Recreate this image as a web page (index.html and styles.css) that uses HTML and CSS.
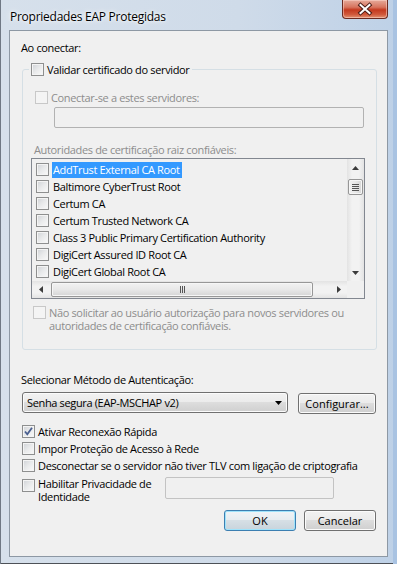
FILE: index.html
```html
<!DOCTYPE html>
<html lang="pt-BR">
<head>
  <meta charset="UTF-8" />
  <title>Propriedades EAP Protegidas</title>
  <link rel="stylesheet" href="styles.css">
</head>
<body>
  <div class="window">
    <div class="titlebar">
      <span class="title">Propriedades EAP Protegidas</span>
      <span class="close">
        <svg width="44" height="18" viewBox="0 0 44 18">
          <path d="M17.5 5 L26.5 13 M26.5 5 L17.5 13" stroke="#4b1d17" stroke-width="4" stroke-linecap="square" fill="none"/>
          <path d="M17.5 5 L26.5 13 M26.5 5 L17.5 13" stroke="#fff" stroke-width="2" stroke-linecap="square" fill="none"/>
        </svg>
      </span>
    </div>

    <div class="client">
      <div class="label">Ao conectar:</div>

      <fieldset class="group">
        <legend><span class="check"><span class="box"></span>Validar certificado do servidor</span></legend>

        <div class="check disabled servers"><span class="box"></span>Conectar-se a estes servidores:</div>
        <div class="textbox servers-box"></div>

        <div class="label disabled ca-label">Autoridades de certificação raiz confiáveis:</div>
        <div class="listbox">
          <ul class="items">
            <li><span class="box"></span><span class="name selected">AddTrust External CA Root</span></li>
            <li><span class="box"></span><span class="name">Baltimore CyberTrust Root</span></li>
            <li><span class="box"></span><span class="name">Certum CA</span></li>
            <li><span class="box"></span><span class="name">Certum Trusted Network CA</span></li>
            <li><span class="box"></span><span class="name">Class 3 Public Primary Certification Authority</span></li>
            <li><span class="box"></span><span class="name">DigiCert Assured ID Root CA</span></li>
            <li><span class="box"></span><span class="name">DigiCert Global Root CA</span></li>
          </ul>
          <div class="vscroll">
            <span class="arrow"><svg width="7" height="4"><polygon points="0,4 3.5,0 7,4" fill="#3c3c3c"/></svg></span>
            <span class="vthumb"><i></i><i></i><i></i><i></i></span>
            <span class="spacer"></span>
            <span class="arrow"><svg width="7" height="4"><polygon points="0,0 3.5,4 7,0" fill="#3c3c3c"/></svg></span>
          </div>
          <div class="hscroll">
            <span class="arrow"><svg width="4" height="7"><polygon points="4,0 0,3.5 4,7" fill="#3c3c3c"/></svg></span>
            <span class="hthumb"><i></i><i></i><i></i></span>
            <span class="spacer"></span>
            <span class="arrow"><svg width="4" height="7"><polygon points="0,0 4,3.5 0,7" fill="#3c3c3c"/></svg></span>
          </div>
          <div class="corner"></div>
        </div>

        <div class="check disabled multi">
          <span class="box"></span>
          <span>Não solicitar ao usuário autorização para novos servidores ou autoridades de certificação confiáveis.</span>
        </div>
      </fieldset>

      <div class="label method-label">Selecionar Método de Autenticação:</div>
      <div class="method-row">
        <div class="combo">
          <span>Senha segura (EAP-MSCHAP v2)</span>
          <svg width="7" height="4"><polygon points="0,0 7,0 3.5,4" fill="#000"/></svg>
        </div>
        <button class="btn configure">Configurar...</button>
      </div>

      <div class="options">
        <div class="check opt">
          <span class="box checked">
            <svg width="11" height="11" viewBox="0 0 11 11"><path d="M2 5.5 L4.3 8.3 L9 1.8" stroke="#4a5f8f" stroke-width="1.8" fill="none"/></svg>
          </span>Ativar Reconexão Rápida
        </div>
        <div class="check opt"><span class="box"></span>Impor Proteção de Acesso à Rede</div>
        <div class="check opt"><span class="box"></span>Desconectar se o servidor não tiver TLV com ligação de criptografia</div>
        <div class="privacy">
          <div class="check privacy-check"><span class="box"></span><span class="privacy-text">Habilitar Privacidade de Identidade</span></div>
          <div class="textbox identity-box"></div>
        </div>
      </div>

      <div class="actions">
        <button class="btn default">OK</button>
        <button class="btn">Cancelar</button>
      </div>
    </div>
  </div>
</body>
</html>
```

FILE: styles.css
```css
* {
  box-sizing: border-box;
}
body {
  margin: 0;
  font-family: "Open Sans", "Segoe UI", sans-serif;
  font-size: 11px;
  letter-spacing: -0.35px;
  color: #000;
}
.window {
  width: 397px;
  height: 564px;
  padding: 0 9px 7px 9px;
  display: flex;
  flex-direction: column;
  background: linear-gradient(to right, #d6e0eb 0%, #cfdbe9 60%, #bed1e7 100%);
  box-shadow: inset 1px 0 0 #6f7884, inset -4px 0 0 #a9c3e2, inset 0 -1px 0 #4d5157;
}
.titlebar {
  height: 30px;
  display: flex;
  justify-content: space-between;
  align-items: flex-start;
}
.title {
  padding: 9px 0 0 1px;
  font-size: 12px;
  line-height: 15px;
  letter-spacing: -0.25px;
  text-shadow: 0 0 6px #fff, 0 0 3px #fff;
}
.close {
  width: 46px;
  height: 19px;
  border: 1px solid #6b2a21;
  border-top: none;
  border-radius: 0 0 4px 4px;
  background: linear-gradient(#e6aa9b 0%, #d7745e 40%, #c4391f 55%, #d0583b 80%, #e29272 100%);
  box-shadow: inset 0 0 0 1px rgba(255, 220, 210, 0.5);
}
.close svg {
  display: block;
}
.client {
  flex: 1;
  border: 1px solid #8d98a4;
  background-color: #f0f0f0;
  padding: 9px 10px 0 11px;
}
.label {
  line-height: 15px;
}
.disabled {
  color: #8d8d8d;
}

/* checkbox */
.check {
  display: flex;
  align-items: center;
  gap: 3px;
}
.box {
  flex: none;
  width: 13px;
  height: 13px;
  border: 1px solid #8e8f8f;
  background: linear-gradient(135deg, #cfd2d6 0%, #e9eaeb 50%, #fafafa 100%);
  box-shadow: inset 0 0 0 1px #f4f4f4;
}
.box.checked {
  display: flex;
  align-items: center;
  justify-content: center;
}
.disabled .box {
  border-color: #c8c8c8;
  background: #f4f4f4;
  box-shadow: none;
}

/* group box */
.group {
  margin: 7px 0 0 1px;
  padding: 0;
  border: 1px solid #d5dfe5;
  border-radius: 3px;
}
.group legend {
  margin-left: 6px;
  padding: 0 2px;
  line-height: 15px;
}
.servers {
  margin: 13px 0 0 12px;
  line-height: 15px;
}
.textbox {
  border: 1px solid #b2b2b2;
  background-color: #f0f0f0;
  border-radius: 2px;
}
.servers-box {
  height: 21px;
  margin: 2px 12px 0 31px;
}
.ca-label {
  margin: 14px 0 0 11px;
}

/* list of certificates */
.listbox {
  height: 141px;
  margin: 1px 11px 0 8px;
  border: 1px solid #828790;
  background-color: #f0f0f0;
  display: grid;
  grid-template-columns: 1fr 17px;
  grid-template-rows: 1fr 17px;
}
.items {
  list-style: none;
  margin: 0;
  padding: 2px 0 0 4px;
  overflow: hidden;
  white-space: nowrap;
}
.items li {
  height: 17px;
  display: flex;
  align-items: center;
}
.items .box {
  margin-right: 3px;
}
.name {
  padding: 0 2px 0 1px;
  line-height: 16px;
}
.name.selected {
  background-color: #3399ff;
  color: #fff;
}
.vscroll,
.hscroll {
  display: flex;
}
.vscroll {
  flex-direction: column;
  background: linear-gradient(to right, #e3e3e3, #f2f2f2 30%, #f2f2f2 70%, #e3e3e3);
}
.hscroll {
  background: linear-gradient(#e3e3e3, #f2f2f2 30%, #f2f2f2 70%, #e3e3e3);
}
.arrow {
  flex: none;
  width: 17px;
  height: 17px;
  display: flex;
  align-items: center;
  justify-content: center;
}
.spacer {
  flex: 1;
}
.vthumb,
.hthumb {
  display: flex;
  align-items: center;
  justify-content: center;
  border: 1px solid #979797;
  border-radius: 2px;
  box-shadow: inset 0 0 0 1px #f6f6f6;
}
.vthumb {
  flex-direction: column;
  gap: 1px;
  height: 16px;
  margin: 3px 1px 0 1px;
  background: linear-gradient(to right, #f2f2f2, #e8e8e8 50%, #d5d5d5);
}
.vthumb i {
  width: 7px;
  height: 1px;
  background: #555;
}
.hthumb {
  gap: 1px;
  width: 262px;
  margin: 1px 0 1px 2px;
  background: linear-gradient(#f2f2f2, #e8e8e8 50%, #d5d5d5);
}
.hthumb i {
  width: 1px;
  height: 7px;
  background: #555;
}
.corner {
  background-color: #f0f0f0;
}
.multi {
  align-items: flex-start;
  gap: 3px;
  margin: 7px 0 17px 10px;
  line-height: 13px;
}

/* method */
.method-label {
  margin-top: 22px;
}
.method-row {
  display: flex;
  justify-content: space-between;
  align-items: flex-start;
  margin: 5px 1px 0 1px;
}
.combo {
  width: 266px;
  height: 21px;
  padding: 0 5px 0 4px;
  display: flex;
  align-items: center;
  justify-content: space-between;
  border: 1px solid #707070;
  border-radius: 3px;
  background: linear-gradient(#f2f2f2 0%, #ebebeb 49%, #dddddd 50%, #cfcfcf 100%);
  box-shadow: inset 0 0 0 1px #fbfbfb;
}
.btn {
  height: 21px;
  width: 72px;
  padding: 0;
  font: inherit;
  color: #000;
  border: 1px solid #707070;
  border-radius: 3px;
  background: linear-gradient(#f2f2f2 0%, #ebebeb 49%, #dddddd 50%, #cfcfcf 100%);
  box-shadow: inset 0 0 0 1px #fbfbfb;
}
.btn.configure {
  width: 78px;
  margin-top: 1px;
}
.btn.default {
  border-color: #3c7fb1;
  box-shadow: inset 0 0 0 1px #9fe3fb;
  background: linear-gradient(#f0f4f7 0%, #e6ecf0 49%, #d6dfe5 50%, #c8d4dc 100%);
}

/* options */
.options {
  margin: 9px 0 0 1px;
}
.opt {
  line-height: 17px;
}
.privacy {
  display: flex;
  align-items: flex-start;
  margin-top: 3px;
}
.privacy-check {
  align-items: flex-start;
  width: 143px;
}
.privacy-check .box {
  margin-top: 2px;
}
.privacy-text {
  line-height: 13px;
}
.identity-box {
  width: 169px;
  height: 22px;
  border-color: #c3c3c3;
}
.actions {
  display: flex;
  justify-content: flex-end;
  gap: 8px;
  margin: 7px 1px 0 0;
}
```
